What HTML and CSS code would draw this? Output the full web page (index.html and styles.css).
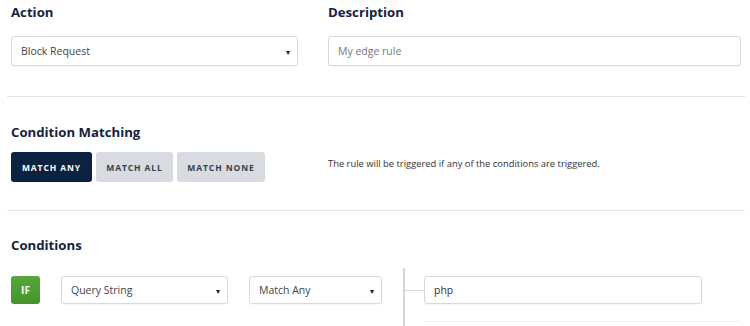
FILE: index.html
```html
<!DOCTYPE html>
<html>
<head>
<meta charset="utf-8">
<link rel="stylesheet" href="styles.css">
</head>
<body>
<div class="page">
  <section class="grid">
    <div class="field">
      <h2 class="heading">Action</h2>
      <div class="select wide"><span>Block Request</span><span class="caret">&#9662;</span></div>
    </div>
    <div class="field">
      <h2 class="heading">Description</h2>
      <div class="input placeholder">My edge rule</div>
    </div>
  </section>
  <hr class="sep sep1">
  <h2 class="heading">Condition Matching</h2>
  <section class="grid match">
    <div class="btns">
      <button class="btn active">MATCH ANY</button>
      <button class="btn">MATCH ALL</button>
      <button class="btn">MATCH NONE</button>
    </div>
    <p class="note">The rule will be triggered if any of the conditions are triggered.</p>
  </section>
  <hr class="sep sep2">
  <h2 class="heading">Conditions</h2>
  <section class="cond">
    <div class="cond-left">
      <div class="if">IF</div>
      <div class="select qs"><span>Query String</span><span class="caret">&#9662;</span></div>
      <div class="select ma"><span>Match Any</span><span class="caret">&#9662;</span></div>
    </div>
    <div class="branch">
      <div class="branch-row">
        <span class="connector"></span>
        <div class="input value">php</div>
      </div>
      <div class="ghost"></div>
    </div>
  </section>
</div>
</body>
</html>
```
FILE: styles.css
```css
* { box-sizing: border-box; }
html, body { margin: 0; padding: 0; background: #fff; }
body { font-family: "Open Sans", "Noto Sans", sans-serif; color: #333; overflow: hidden; }
.page { padding: 2px 9px 0 11px; width: 750px; height: 326px; }
.heading { margin: 0; font-size: 13.2px; line-height: 20px; font-weight: 700; color: #14233c; }
.grid { display: grid; grid-template-columns: 287px 1fr; column-gap: 30px; }
.field .heading { margin-bottom: 14px; }
.select, .input {
  height: 30px; border: 1px solid #d9d9d9; border-radius: 3px; background: #fff;
  font-size: 10.5px; color: #444; display: flex; align-items: center; padding: 0 9px;
  box-shadow: 0 1px 1px rgba(0,0,0,0.03);
}
.select { justify-content: space-between; }
.caret { font-size: 8px; color: #222; margin-right: -2px; }
.placeholder { color: #777; }
.sep { border: 0; height: 1px; background: #e2e2e2; margin: 0 -4px; }
.sep1 { margin-top: 30px; margin-bottom: 25px; }
.match { margin-top: 10px; align-items: center; }
.btns { display: flex; gap: 4px; }
.btn {
  height: 30px; border: 0; border-radius: 3px; background: #d8dce0; color: #34404e;
  font-family: "Open Sans", sans-serif; font-weight: 700; font-size: 8.5px; letter-spacing: 0.9px;
  padding: 0; white-space: nowrap; text-align: center;
}
.btn:nth-child(2) { width: 77px; }
.btn:nth-child(3) { width: 88px; }
.btn.active { background: #0b2340; color: #fff; width: 81px; }
.note { margin: 0 0 7px; font-size: 9.4px; color: #333; }
.sep2 { margin-top: 28px; margin-bottom: 24px; }
.cond { display: flex; margin-top: 13px; height: 64px; }
.cond-left { display: flex; gap: 21px; margin-top: 8px; margin-right: 21px; height: 28px; }
.if {
  width: 29px; height: 28px; border-radius: 3px; background: linear-gradient(#56a83a, #43932a);
  color: #fff; font-weight: 700; font-size: 10px; display: flex; align-items: center; justify-content: center;
}
.cond-left .select { height: 28px; }
.qs { width: 167px; }
.ma { width: 133px; }
.branch { border-left: 2px solid #d6d6d6; flex: 1; }
.branch-row { display: flex; align-items: center; margin-top: 8px; }
.connector { width: 19px; height: 1px; background: #d6d6d6; }
.value { width: 278px; height: 28px; color: #333; }
.ghost { margin: 17px 0 0 19px; height: 1px; background: #f2f2f2; }
```
